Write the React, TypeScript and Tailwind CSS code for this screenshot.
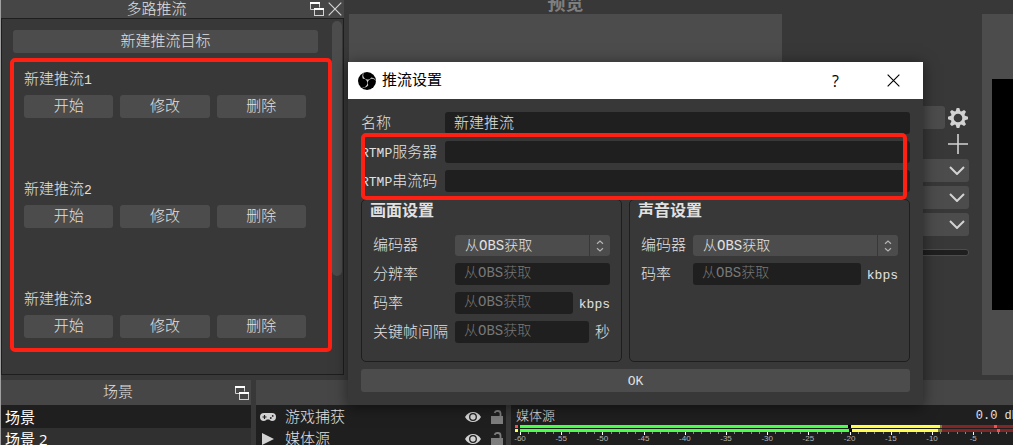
import type { ReactNode } from 'react';
import { SiObsstudio } from 'react-icons/si';

const TARGETS = [1, 2, 3];

const SOURCES = [
  { name: '游戏捕获', icon: 'gamepad' },
  { name: '媒体源', icon: 'play' },
];

const buttonClass =
  'h-[23px] rounded-[3px] bg-[#4c4c4c] pt-[2px] text-[15px] leading-none text-[#e1e1e1] hover:bg-[#5a5a5a]';
const inputClass =
  'h-[22px] w-full min-w-0 rounded-[3px] bg-[#1f1f1f] px-[9px] pb-[2px] leading-none text-[#e1e1e1] outline-none placeholder:text-[14px] placeholder:text-[#777777]';

// Half-width latin letters next to full-width characters
function Latin({ children }: { children: ReactNode }) {
  return <span className="text-[13px]">{children}</span>;
}

function FloatIcon() {
  return (
    <svg className="h-[14px] w-[14px]" viewBox="0 0 14 14" fill="none" stroke="#d2d2d2">
      <path d="M4.5 7.5H.5V1.500h9v4" />
      <path d="M0 1h10" stroke="#ffffff" strokeWidth="2" />
      <rect x="4.500" y="6.500" width="9" height="7" />
      <path d="M4 7h10" stroke="#ffffff" strokeWidth="2" />
    </svg>
  );
}

function CloseIcon({ className }: { className: string }) {
  return (
    <svg className={className} viewBox="0 0 14 14" fill="none" stroke="currentColor" strokeWidth="1.2">
      <path d="M.7.7l12.600 12.600M13.300.7L.7 13.300" />
    </svg>
  );
}

function GearIcon() {
  return (
    <svg className="h-5 w-5" viewBox="-10 -10 20 20" stroke="#d2d2d2" fill="none">
      <circle r="5.800" strokeWidth="3" />
      {[0, 45, 90, 135, 180, 225, 270, 315].map((angle) => (
        <path key={angle} d="M-2.400 -6.500L-1.300 -10H1.300L2.400 -6.500Z" fill="#d2d2d2" stroke="none" transform={`rotate(${angle})`} />
      ))}
    </svg>
  );
}

function EyeIcon() {
  return (
    <svg className="h-3 w-4" viewBox="0 0 16 12">
      <path d="M0 6C2 2.500 4.800 1 8 1s6 1.500 8 5c-2 3.500-4.800 5-8 5S2 9.500 0 6z" fill="#d2d2d2" />
      <circle cx="8" cy="6" r="3.300" fill="none" stroke="#1f1f1f" strokeWidth="1.300" />
    </svg>
  );
}

function UnlockIcon() {
  return (
    <svg className="h-[14px] w-3" viewBox="0 0 12 14">
      <rect y="6" width="12" height="8" fill="#7d7d7d" />
      <path d="M9.500 6V3.500a2.500 2.500 0 0 0-2.500-2.500H6a2.500 2.500 0 0 0-2.300 2" fill="none" stroke="#7d7d7d" strokeWidth="1.800" />
    </svg>
  );
}

function SourceIcon({ icon }: { icon: string }) {
  if (icon === 'play') {
    return (
      <svg className="h-3 w-4" viewBox="0 0 16 12">
        <path d="M2 0l12 6-12 6z" fill="#d2d2d2" />
      </svg>
    );
  }
  return (
    <svg className="h-3 w-4" viewBox="0 0 16 12">
      <path d="M4 2h8a4 4 0 0 1 0 8c-1.300 0-2-.8-2.800-1.500H6.800C6 9.200 5.300 10 4 10a4 4 0 0 1 0-8z" fill="#d2d2d2" />
      <path d="M4.500 4v4M2.500 6h4" stroke="#1f1f1f" strokeWidth="1.200" />
      <circle cx="12.700" cy="4.900" r=".9" fill="#1f1f1f" />
      <circle cx="10.800" cy="7" r=".9" fill="#1f1f1f" />
    </svg>
  );
}

function ChevronDown() {
  return (
    <svg className="h-[9px] w-4" viewBox="0 0 16 9" fill="none" stroke="#d2d2d2" strokeWidth="2">
      <path d="M1 1l7 7 7-7" />
    </svg>
  );
}

function DockTitle({ title, children }: { title?: string; children?: ReactNode }) {
  return (
    <div className="flex h-[25px] shrink-0 items-center bg-[#464646] pr-[2px] text-[15px] leading-none">
      <h2 className="flex-1 pt-[2px] text-center">{title}</h2>
      {children}
    </div>
  );
}

function StreamTarget({ index }: { index: number }) {
  return (
    <li className="h-[110px]">
      <h3 className="flex h-[18px] items-center text-[15px] leading-none">
        新建推流<Latin>{index}</Latin>
      </h3>
      <div className="mt-[6px] grid grid-cols-3 gap-[7px]">
        <button className={buttonClass}>开始</button>
        <button className={buttonClass}>修改</button>
        <button className={buttonClass}>删除</button>
      </div>
    </li>
  );
}

function MultiStreamDock() {
  return (
    <section className="flex w-[343px] shrink-0 flex-col">
      <header className="flex h-[18px] items-center gap-[4px] bg-[#464646] pl-[6px] pr-[2px] leading-none">
        <h2 className="flex-1 pt-[2px] text-center text-[15px] leading-none">多路推流</h2>
        <button aria-label="浮动">
          <FloatIcon />
        </button>
        <button aria-label="关闭" className="text-[#d2d2d2]">
          <CloseIcon className="h-[14px] w-[14px]" />
        </button>
      </header>
      <div className="flex min-h-0 flex-1 border border-[#1e1e1e]">
        <div className="min-w-0 flex-1 overflow-hidden pl-2 pt-[11px]">
          <div className="flex pl-[3px] pr-[14px]">
            <button className={`${buttonClass} flex-1`}>新建推流目标</button>
          </div>
          <ul className="mt-[5px] h-[294px] overflow-hidden rounded-[5px] border-4 border-[#ff2014] pl-[10px] pr-[22px] pt-[9px]">
            {TARGETS.map((n) => (
              <StreamTarget key={n} index={n} />
            ))}
          </ul>
        </div>
        <div className="w-[11px] shrink-0 pr-px pt-[2px]">
          <div className="h-[255px] rounded-full bg-[#4c4c4c]" />
        </div>
      </div>
    </section>
  );
}

function TransitionControls() {
  return (
    <div className="flex w-[200px] shrink-0 flex-col gap-1 pr-[13px] pt-[106px]">
      <div className="flex items-center gap-[3px]">
        <button aria-label="转场" className={`${buttonClass} flex-1`} />
        <button aria-label="设置" className="mr-[1px]">
          <GearIcon />
        </button>
      </div>
      <div className="flex h-[22px] justify-end">
        <button aria-label="添加">
          <svg className="h-5 w-[21px]" viewBox="0 0 21 20" stroke="#d2d2d2" strokeWidth="1.600">
            <path d="M0 10h20M10 0v20" />
          </svg>
        </button>
      </div>
      {[0, 1, 2].map((n) => (
        <button key={n} aria-label={`快速转场 ${n + 1}`} className="flex h-[23px] items-center justify-end rounded-[3px] bg-[#4c4c4c] pr-1">
          <ChevronDown />
        </button>
      ))}
      <div className="mt-[9px] h-[7px] rounded-[3px] border border-[#4c4c4c] bg-[#1f1f1f]" />
    </div>
  );
}

function ComboBox({ id }: { id: string }) {
  return (
    <div className="flex h-[21px] min-w-0 gap-px">
      <select
        id={id}
        className="min-w-0 flex-1 appearance-none rounded-l-[3px] bg-[#4c4c4c] pl-[10px] text-[14px] leading-none text-[#e1e1e1] outline-none"
      >
        <option>从OBS获取</option>
      </select>
      <span className="flex w-5 items-center justify-center rounded-r-[3px] bg-[#4c4c4c]">
        <svg className="h-3 w-2" viewBox="0 0 8 12" fill="none" stroke="#b4b4b4" strokeWidth="1.200">
          <path d="M1 3.800L4 1l3 2.800M1 8.200L4 11l3-2.800" />
        </svg>
      </span>
    </div>
  );
}

function Field({ id, label, unit }: { id: string; label: string; unit?: ReactNode }) {
  return (
    <>
      <label htmlFor={id} className="pt-[2px]">
        {label}
      </label>
      <div className="flex items-center gap-[6px]">
        <input id={id} className={inputClass} placeholder="从OBS获取" />
        {unit && <span className="shrink-0 pt-[2px]">{unit}</span>}
      </div>
    </>
  );
}

function SettingsGroup({ title, children }: { title: string; children: ReactNode }) {
  return (
    <section className="h-[163px] rounded-[5px] border border-[#1e1e1e] px-[11px]">
      <h3 className="-ml-[3px] flex h-[22px] items-center pt-[2px] text-[16px] font-bold leading-none">{title}</h3>
      <div className="mt-[13px] grid grid-cols-[auto_1fr] items-center gap-[7px] text-[15px] leading-none">{children}</div>
    </section>
  );
}

function StreamDialog() {
  return (
    <div
      role="dialog"
      aria-label="推流设置"
      className="absolute left-[347px] top-[62px] w-[575px] bg-[#383838] shadow-[0_2px_14px_rgba(0,0,0,0.5)]"
    >
      <header className="flex h-[37px] items-center bg-white pl-[10px] text-black">
        <span className="flex h-[18px] w-[18px] items-center justify-center overflow-hidden rounded-full bg-black text-[#d0d0d0]">
          <SiObsstudio className="h-[21px] w-[21px] shrink-0" />
        </span>
        <h2 className="ml-[6px] flex-1 pt-[2px] text-[15px] font-normal leading-none">推流设置</h2>
        <button aria-label="帮助" className="w-[57px] font-['Open_Sans'] text-[16px] font-normal">
          ?
        </button>
        <button aria-label="关闭" className="flex w-[59px] justify-center">
          <CloseIcon className="h-[13px] w-[13px]" />
        </button>
      </header>

      <form className="relative px-[13px] pb-[13px] pt-[13px]" onSubmit={(e) => e.preventDefault()}>
        <div className="grid grid-cols-[77px_1fr] items-center gap-[7px] text-[15px] leading-none">
          <label htmlFor="name" className="pt-[2px]">
            名称
          </label>
          <input id="name" className={inputClass} defaultValue="新建推流" />
          <label htmlFor="server" className="whitespace-nowrap pt-[2px]">
            <Latin>RTMP</Latin>服务器
          </label>
          <input id="server" className={inputClass} />
          <label htmlFor="key" className="whitespace-nowrap pt-[2px]">
            <Latin>RTMP</Latin>串流码
          </label>
          <input id="key" type="password" className={inputClass} />
        </div>
        {/* highlight around the server fields */}
        <div className="pointer-events-none absolute left-[13px] right-4 top-[34px] h-[67px] rounded-[5px] border-4 border-[#ff2014]" />

        <div className="mt-[7px] grid grid-cols-[261fr_281fr] gap-[7px]">
          <SettingsGroup title="画面设置">
            <label htmlFor="video-encoder" className="pt-[2px]">
              编码器
            </label>
            <ComboBox id="video-encoder" />
            <Field id="resolution" label="分辨率" />
            <Field id="video-bitrate" label="码率" unit={<Latin>kbps</Latin>} />
            <Field id="keyframe" label="关键帧间隔" unit="秒" />
          </SettingsGroup>
          <SettingsGroup title="声音设置">
            <label htmlFor="audio-encoder" className="pt-[2px]">
              编码器
            </label>
            <ComboBox id="audio-encoder" />
            <Field id="audio-bitrate" label="码率" unit={<Latin>kbps</Latin>} />
          </SettingsGroup>
        </div>

        <button className={`${buttonClass} mt-[7px] block w-full`}>
          <Latin>OK</Latin>
        </button>
      </form>
    </div>
  );
}

function VolumeMeter() {
  const ticks = Array.from({ length: 61 }, (_, i) => i);
  return (
    <svg className="h-5 w-[502px]" viewBox="0 0 502 20">
      <path d="M4 1h3v3H4z" fill="#ff4c4c" />
      <path d="M4 5h3v3H4z" fill="#ffff4c" />
      <path d="M9 1h328v3H9zM9 5h329v3H9z" fill="#4cff4c" />
      <path d="M337 1h3v3h-3zM338 5h3v3h-3z" fill="#000000" />
      <path d="M340 1h89v3h-89zM341 5h86v3h-86z" fill="#ffff4c" />
      <path d="M429 1h2v3h-2zM427 5h4v3h-4z" fill="#7f7f26" />
      <path d="M431 1h71v3h-71zM431 5h71v3h-71z" fill="#7f2626" />
      <path d="M483 1h3v3h-3zM486 5h3v3h-3z" fill="#ff4c4c" />
      {ticks.map((i) => {
        const x = Math.round(9 + i * 8.24);
        return <rect key={i} x={x} y="8" width="1" height={i % 5 === 0 ? 3 : 2} fill={i % 5 === 0 ? '#ffffff' : '#8a8a8a'} />;
      })}
      {ticks
        .filter((i) => i % 5 === 0 && i < 60)
        .map((i) => (
          <text key={i} x={9 + i * 8.24} y="17" fontSize="8" fontFamily="Liberation Sans, sans-serif" textAnchor="middle" fill="#b4b4b4">
            {i - 60}
          </text>
        ))}
    </svg>
  );
}

export default function App() {
  return (
    <div className="relative flex h-screen flex-col gap-[5px] overflow-hidden border-l border-[#a0a0a0] bg-[#383838] font-['Liberation_Mono','Noto_Sans_CJK_SC',monospace] font-light text-[#e1e1e1]">
      <main className="flex min-h-0 flex-1 gap-[5px]">
        <MultiStreamDock />
        <div className="flex min-w-0 flex-1">
          <section className="flex min-w-0 flex-1 flex-col">
            <h2 className="flex h-[14px] items-end justify-center text-[18px] font-bold leading-none text-[#7f7f7f]">预览</h2>
            <div className="flex-1 bg-[#4c4c4c]" />
          </section>
          <TransitionControls />
          <section className="mt-[14px] w-[31px] shrink-0 bg-[#4c4c4c] pl-[10px] pt-[65px]">
            <div className="h-[231px] bg-black" />
          </section>
        </div>
      </main>

      <footer className="flex h-[65px] shrink-0 gap-[5px]">
        <section className="flex w-[250px] shrink-0 flex-col">
          <DockTitle title="场景">
            <button aria-label="浮动">
              <FloatIcon />
            </button>
          </DockTitle>
          <ul className="flex-1 bg-[#1f1f1f] font-['Open_Sans','Noto_Sans_CJK_SC',sans-serif] text-[15px] font-normal leading-none text-white">
            <li className="flex h-[23px] items-center px-1 pt-[2px]">场景</li>
            <li className="flex h-[23px] items-center bg-[#303030] px-1">场景 2</li>
          </ul>
        </section>

        <section className="flex w-[250px] shrink-0 flex-col">
          <DockTitle />
          <ul className="flex-1 bg-[#1f1f1f] pt-[1px] text-[15px] leading-none">
            {SOURCES.map((source) => (
              <li key={source.name} className="flex h-[22px] items-center pl-[4px] pr-[3px]">
                <SourceIcon icon={source.icon} />
                <span className="ml-[9px] flex-1 pt-[2px]">{source.name}</span>
                <button aria-label="显示">
                  <EyeIcon />
                </button>
                <button aria-label="锁定" className="ml-[10px]">
                  <UnlockIcon />
                </button>
              </li>
            ))}
          </ul>
        </section>

        <section className="flex min-w-0 flex-1 flex-col overflow-hidden">
          <DockTitle />
          <div className="flex-1 bg-[#1f1f1f]">
            <div className="flex h-[19px] items-center justify-between pl-[5px] pt-[3px] text-[13px] leading-none">
              <span>媒体源</span>
              <span className="-mr-[6px] whitespace-nowrap text-[12px]">0.0 dB</span>
            </div>
            <VolumeMeter />
          </div>
        </section>
      </footer>

      <StreamDialog />
    </div>
  );
}
